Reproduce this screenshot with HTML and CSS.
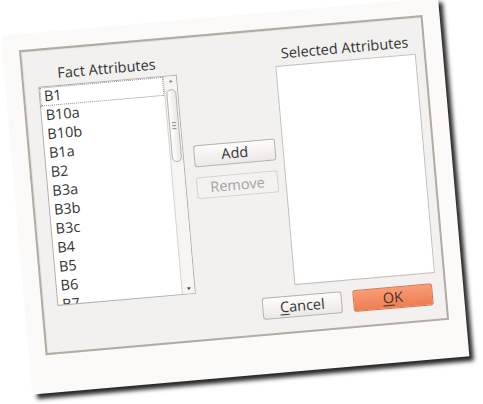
FILE: index.html
```html
<!DOCTYPE html>
<html>
<head>
<meta charset="utf-8">
<link rel="stylesheet" href="styles.css">
</head>
<body>
<div class="photo">
  <div class="dialog">
    <div class="col">
      <div class="label">Fact Attributes</div>
      <div class="list">
        <div class="items">
          <div class="item focus">B1</div>
          <div class="item">B10a</div>
          <div class="item">B10b</div>
          <div class="item">B1a</div>
          <div class="item">B2</div>
          <div class="item">B3a</div>
          <div class="item">B3b</div>
          <div class="item">B3c</div>
          <div class="item">B4</div>
          <div class="item">B5</div>
          <div class="item">B6</div>
          <div class="item">B7</div>
        </div>
        <div class="scrollbar">
          <svg class="arrow" width="11" height="10" viewBox="0 0 11 10"><path d="M3.5 6 L5.5 3.5 L7.5 6 Z" fill="#8a8580"/></svg>
          <div class="thumb"><span class="grip"></span><span class="grip"></span><span class="grip"></span></div>
          <div class="track-space"></div>
          <svg class="arrow" width="11" height="10" viewBox="0 0 11 10"><path d="M3.5 4 L7.5 4 L5.5 6.5 Z" fill="#3f3c3a"/></svg>
        </div>
      </div>
    </div>
    <div class="mid">
      <button class="btn">Add</button>
      <button class="btn disabled">Remove</button>
    </div>
    <div class="col">
      <div class="label">Selected Attributes</div>
      <div class="list empty"></div>
    </div>
    <div class="footer">
      <button class="btn wide"><u>C</u>ancel</button>
      <button class="btn wide ok"><u>O</u>K</button>
    </div>
  </div>
</div>
</body>
</html>
```

FILE: styles.css
```css
html, body {
  margin: 0;
  height: 100%;
}
body {
  background: #ffffff;
  display: flex;
  align-items: center;
  justify-content: center;
  overflow: hidden;
  font-family: "Open Sans", "DejaVu Sans", sans-serif;
  color: #333333;
}
.photo {
  flex: none;
  box-sizing: border-box;
  width: 438px;
  height: 360px;
  padding: 16px 17px 38px 16px;
  background: #fcfaf8;
  box-shadow: 4px 5px 4px rgba(0, 0, 0, 0.85);
  transform: translate(-6.5px, -6px) rotate(-5deg);
}
.dialog {
  box-sizing: border-box;
  width: 405px;
  height: 306px;
  border: 2px solid #b3aba2;
  box-shadow: inset 1px 1px 0 #e6e2dd;
  background: #f2f1f0;
  padding: 15px 0 0 14px;
  display: grid;
  grid-template-columns: 139px 99px 141px;
  grid-template-rows: 241px auto;
  align-items: start;
}
.col {
  display: flex;
  flex-direction: column;
}
.label {
  height: 18px;
  line-height: 18px;
  font-size: 14.5px;
  text-align: center;
  margin-bottom: 3px;
  white-space: nowrap;
}
.list {
  box-sizing: border-box;
  height: 220px;
  border: 1px solid #b4aea7;
  background: #ffffff;
  display: flex;
  overflow: hidden;
}
.list.empty {
  border-color: #c4beb8;
}
.items {
  flex: 1;
  min-width: 0;
}
.item {
  height: 19px;
  line-height: 18px;
  padding-left: 4px;
  font-size: 14.5px;
  color: #333333;
}
.item.focus {
  outline: 1px dotted #8c8c8c;
  outline-offset: -1px;
}
.scrollbar {
  flex: none;
  width: 12px;
  border-left: 1px solid #d9d5d0;
  background: #f6f5f4;
  display: flex;
  flex-direction: column;
  align-items: center;
}
.arrow {
  display: block;
  flex: none;
}
.thumb {
  box-sizing: border-box;
  width: 10px;
  height: 73px;
  margin-top: 3px;
  border: 1px solid #b8b2ab;
  border-radius: 5px;
  background: linear-gradient(to right, #ffffff, #ebe8e5);
  display: flex;
  flex-direction: column;
  align-items: center;
  justify-content: center;
  gap: 2px;
}
.grip {
  display: block;
  width: 4px;
  height: 1px;
  background: #8d8883;
}
.track-space {
  flex: 1;
}
.mid {
  padding: 93px 7px 0 10px;
  display: flex;
  flex-direction: column;
  gap: 10px;
}
.btn {
  box-sizing: border-box;
  height: 22px;
  width: 82px;
  padding: 0;
  border: 1px solid #b7b1aa;
  border-radius: 3px;
  background: linear-gradient(#fdfdfc, #ebe9e7);
  font-family: "Open Sans", "DejaVu Sans", sans-serif;
  font-size: 14.5px;
  line-height: 20px;
  color: #333333;
}
.btn.disabled {
  border-color: #d6d2cd;
  background: #f3f2f1;
  color: #a3a3a3;
}
.btn u {
  text-decoration-thickness: 1px;
  text-underline-offset: 2px;
}
.footer {
  grid-column: 1 / 4;
  margin-top: 10px;
  padding-right: 4px;
  display: flex;
  justify-content: flex-end;
  gap: 11px;
}
.btn.wide {
  width: 80px;
}
.btn.ok {
  border-color: #d4734b;
  background: linear-gradient(#f99d76, #ee7d52);
  color: #3e3430;
}
```
